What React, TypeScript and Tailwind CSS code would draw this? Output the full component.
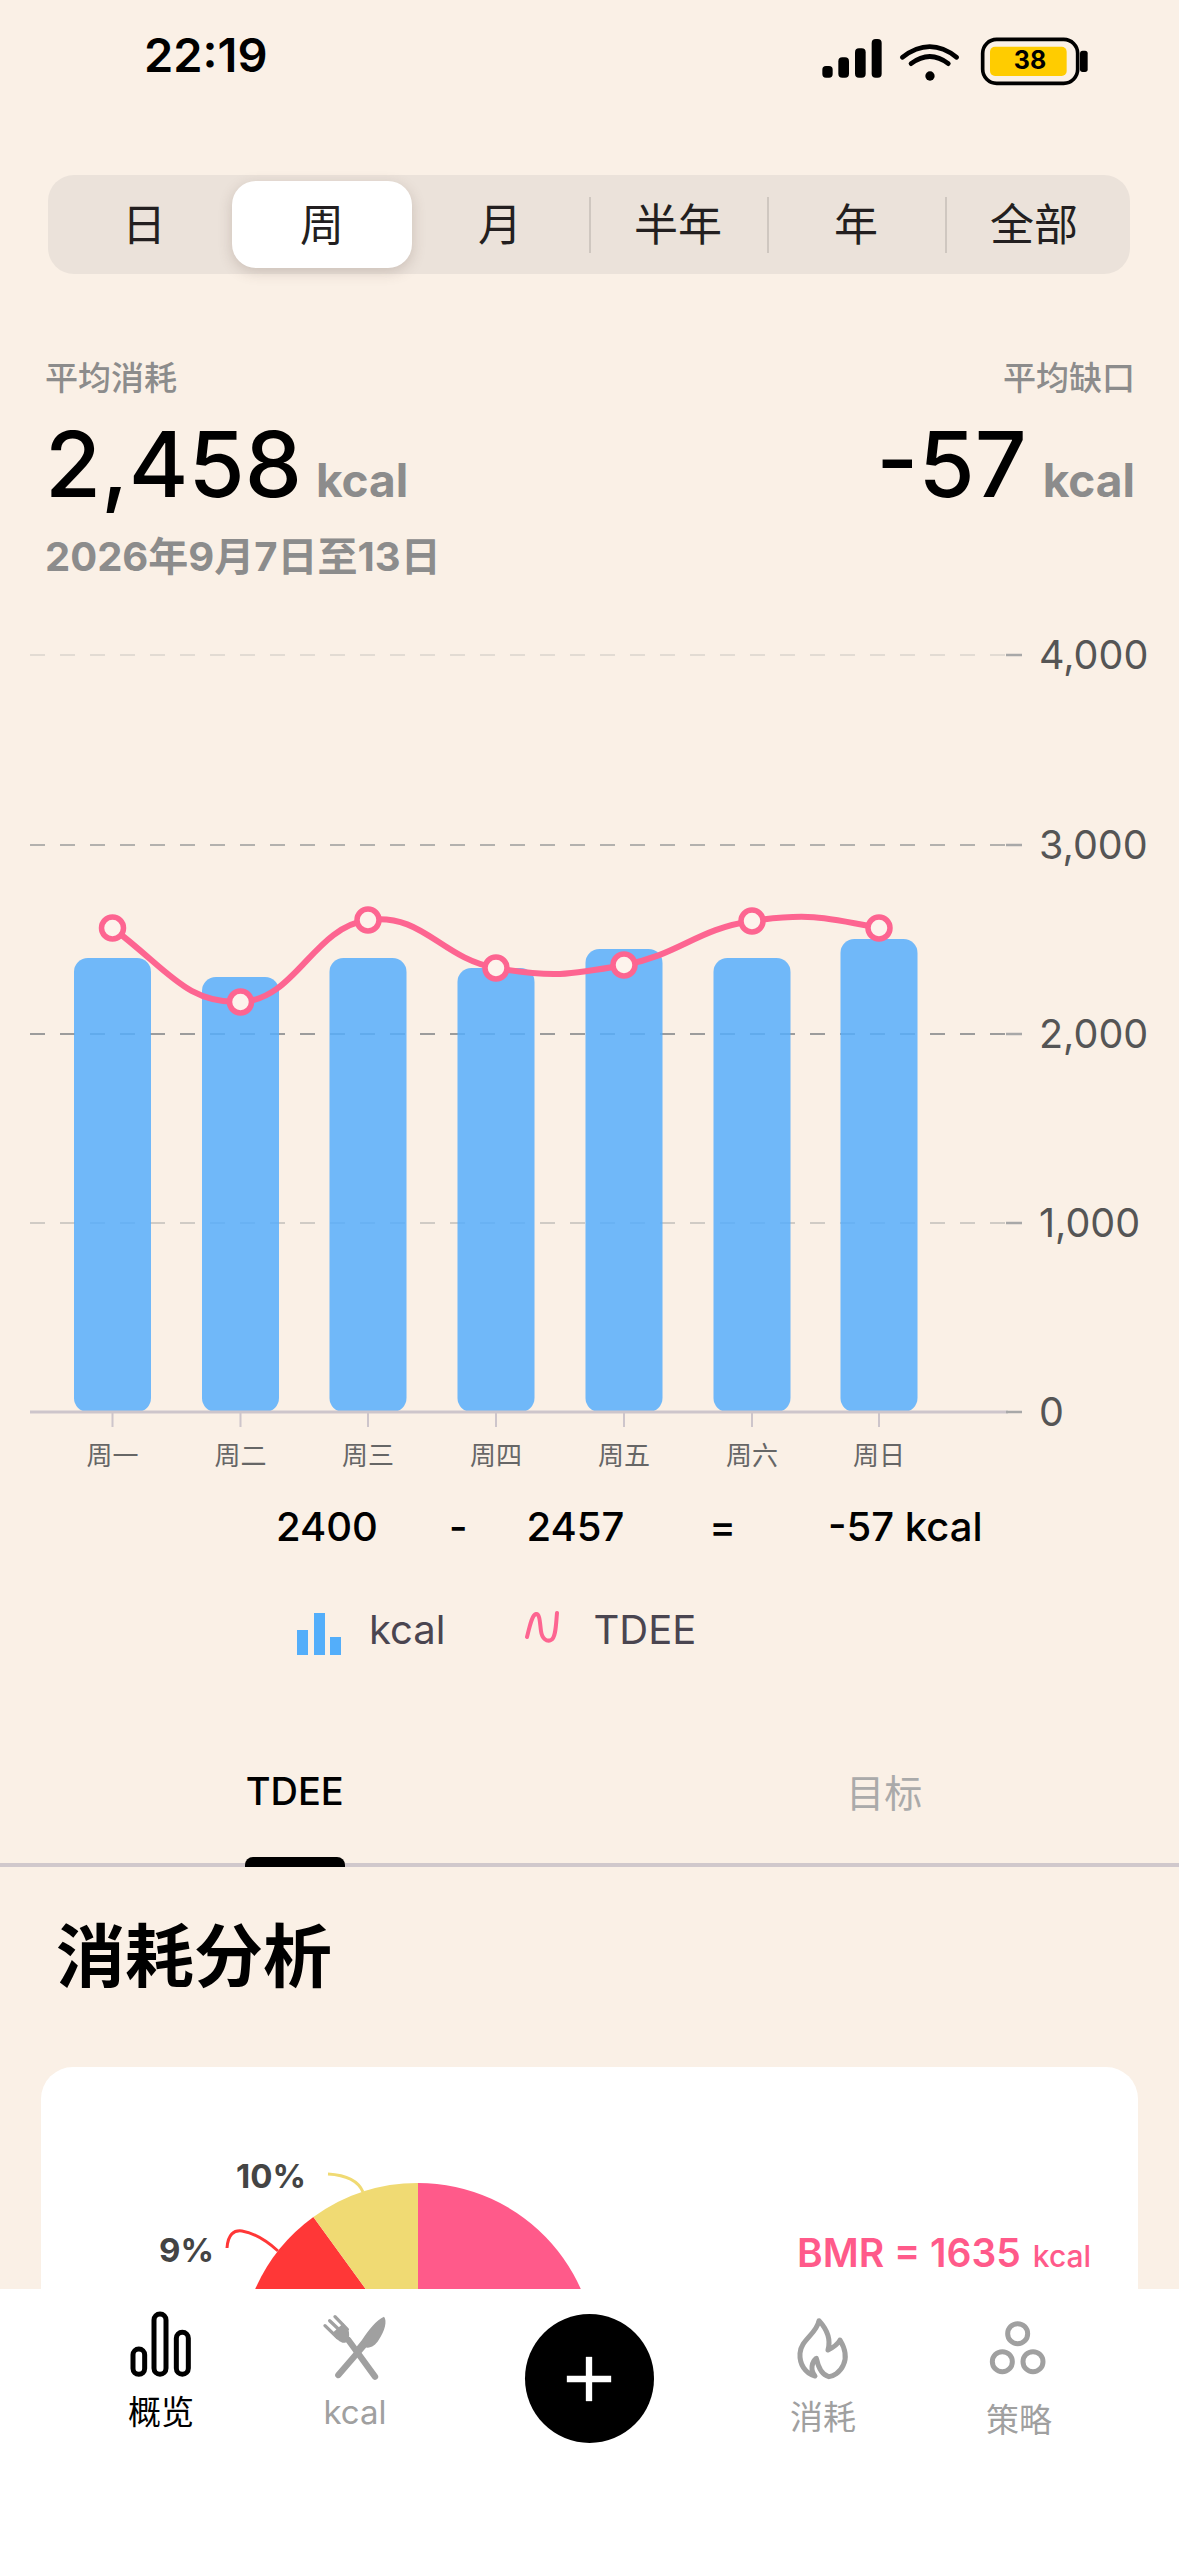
import { Plus } from "lucide-react";

const RANGES = ["日", "周", "月", "半年", "年", "全部"];
const GRID = [
  { y: 655, w: 1, o: 0.5, label: "4,000" },
  { y: 845, w: 1.5, o: 1, label: "3,000" },
  { y: 1034, w: 2, o: 1, label: "2,000" },
  { y: 1223, w: 1.2, o: 0.9, label: "1,000" },
];
const DAYS = [
  { x: 112.5, top: 958, tdee: 928, label: "周一" },
  { x: 240.5, top: 977, tdee: 1002, label: "周二" },
  { x: 368, top: 958, tdee: 920, label: "周三" },
  { x: 496, top: 968, tdee: 968, label: "周四" },
  { x: 624, top: 949, tdee: 965, label: "周五" },
  { x: 752, top: 958, tdee: 921, label: "周六" },
  { x: 879, top: 939, tdee: 928, label: "周日" },
];
const BASE = 1412;

// smooth line through the daily TDEE points
function tdeePath() {
  const slope = (i: number) => {
    if (i === 0) return 0.75;
    if (i === DAYS.length - 1) return 0.2;
    return (DAYS[i + 1].tdee - DAYS[i - 1].tdee) / (DAYS[i + 1].x - DAYS[i - 1].x);
  };
  let d = `M${DAYS[0].x} ${DAYS[0].tdee}`;
  for (let i = 0; i < DAYS.length - 1; i++) {
    const a = DAYS[i];
    const b = DAYS[i + 1];
    const h = 55;
    d += ` C${a.x + h} ${a.tdee + slope(i) * h} ${b.x - h} ${b.tdee - slope(i + 1) * h} ${b.x} ${b.tdee}`;
  }
  return d;
}

function StatusIcons() {
  return (
    <svg viewBox="0 0 1020 240" className="mt-[20px] mr-[59px] h-[80px] w-[340px]">
      <rect x="127" y="138" width="31" height="35" rx="11" />
      <rect x="175" y="112" width="32" height="61" rx="12" />
      <rect x="225" y="85" width="32" height="88" rx="12" />
      <rect x="275" y="57" width="30" height="116" rx="12" />
      <path d="M367 112 Q450 48 530 112" fill="none" stroke="#000" strokeWidth="14" strokeLinecap="round" />
      <path d="M393 131 Q450 88 505 131" fill="none" stroke="#000" strokeWidth="14" strokeLinecap="round" />
      <circle cx="450" cy="168" r="14" />
      <rect x="608" y="58" width="285" height="132" rx="42" fill="none" stroke="#000" strokeWidth="11" />
      <rect x="630" y="80" width="230" height="88" rx="15" fill="#ffcc00" />
      <rect x="900" y="92" width="23" height="64" rx="8" />
      <text x="750" y="146" textAnchor="middle" fontSize="75" fontWeight="700">
        38
      </text>
    </svg>
  );
}

function Chart() {
  return (
    <svg viewBox="0 610 1179 870" className="mt-[31px] block h-[870px] w-[1179px]">
      {GRID.map((g) => (
        <g key={g.y}>
          <line x1="30" x2="1006" y1={g.y} y2={g.y} stroke="#9c9c9c" strokeWidth={g.w} strokeOpacity={g.o} strokeDasharray="15 15" />
          <line x1="1006" x2="1022" y1={g.y} y2={g.y} stroke="#a8a8a8" strokeWidth="2.5" />
          <text x="1039" y={g.y + 14} fontSize="39.5" fill="#555555">
            {g.label}
          </text>
        </g>
      ))}
      {DAYS.map((d) => (
        <rect key={d.x} x={d.x - 38.5} y={d.top} width="77" height={BASE - d.top} rx="14" fill="#57aefb" fillOpacity="0.85" />
      ))}
      <line x1="30" x2="1008" y1={BASE} y2={BASE} stroke="#cdc5cb" strokeWidth="3" />
      <line x1="1006" x2="1022" y1={BASE} y2={BASE} stroke="#a8a8a8" strokeWidth="2.5" />
      <text x="1039" y={BASE + 14} fontSize="39.5" fill="#555555">
        0
      </text>
      {DAYS.map((d) => (
        <g key={d.label}>
          <line x1={d.x} x2={d.x} y1={BASE} y2="1427" stroke="#cdc5cb" strokeWidth="2" />
          <text x={d.x} y="1465" textAnchor="middle" fontSize="26" fill="#666666">
            {d.label}
          </text>
        </g>
      ))}
      <path d={tdeePath()} fill="none" stroke="#fd6591" strokeWidth="6" />
      {DAYS.map((d) => (
        <circle key={d.x} cx={d.x} cy={d.tdee} r="11" fill="#fdf3ec" stroke="#fd6591" strokeWidth="5.5" />
      ))}
    </svg>
  );
}

function sector(from: number, to: number) {
  const cx = 418;
  const cy = 2361;
  const r = 178;
  const pt = (a: number) => {
    const rad = (a * Math.PI) / 180;
    return `${cx + r * Math.sin(rad)} ${cy - r * Math.cos(rad)}`;
  };
  return `M${cx} ${cy} L${pt(from)} A${r} ${r} 0 ${to - from > 180 ? 1 : 0} 1 ${pt(to)} Z`;
}

function Pie() {
  return (
    <svg viewBox="41 2067 700 400" className="h-[400px] w-[700px] shrink-0">
      <path d={sector(0, 292)} fill="#ff5a8a" />
      <path d={sector(-68.4, -36)} fill="#ff3737" />
      <path d={sector(-36, 0)} fill="#f0da73" />
      <path d="M328 2174 C345 2175 358 2180 363 2192" fill="none" stroke="#f0da73" strokeWidth="3" />
      <path d="M227 2248 C228 2234 234 2230 242 2231 C254 2233 268 2242 278 2251" fill="none" stroke="#ff3737" strokeWidth="3" />
      <text x="236" y="2188" fontSize="33" fontWeight="700" fill="#444444">
        10%
      </text>
      <text x="159" y="2262" fontSize="33" fontWeight="700" fill="#444444">
        9%
      </text>
    </svg>
  );
}

function OverviewIcon() {
  return (
    <svg viewBox="33 60 300 225" className="h-[75px] w-[100px]" fill="none" stroke="#000" strokeWidth="15">
      <rect x="99" y="177" width="35" height="76" rx="17.5" />
      <rect x="162" y="72" width="36" height="181" rx="18" />
      <rect x="229" y="127" width="36" height="126" rx="18" />
    </svg>
  );
}

function FoodIcon() {
  return (
    <svg viewBox="615 60 300 225" className="h-[75px] w-[100px]" fill="#a0a0a0">
      <path d="M852 80 C862 92 855 122 836 150 C826 166 812 176 795 172 L772 196 L760 182 L786 150 C806 118 830 90 852 80Z" />
      <path d="M790 168 L715 255" stroke="#a0a0a0" strokeWidth="19" strokeLinecap="round" />
      <path d="M745 150 L825 260" stroke="#a0a0a0" strokeWidth="19" strokeLinecap="round" />
      <path d="M675 107 L712 143 M689 92 L727 128 M705 80 L742 118" stroke="#a0a0a0" strokeWidth="10" strokeLinecap="round" />
      <path d="M698 128 L730 100 L746 122 C750 140 745 155 735 158 C722 160 708 148 698 128Z" />
    </svg>
  );
}

function FlameIcon() {
  return (
    <svg viewBox="39 60 300 225" className="h-[75px] w-[100px]" fill="none" stroke="#a0a0a0" strokeWidth="15" strokeLinejoin="round">
      <path d="M177 92 C198 115 214 145 204 180 C220 172 234 162 240 150 C255 175 262 200 250 225 C240 248 218 260 206 260 C190 256 176 238 169 205 C155 216 150 240 165 258 C135 250 118 222 120 190 C122 150 170 132 177 92Z" />
    </svg>
  );
}

function StrategyIcon() {
  return (
    <svg viewBox="627 60 300 225" className="h-[75px] w-[100px]" fill="none" stroke="#a0a0a0" strokeWidth="15">
      <circle cx="773" cy="131" r="30" />
      <circle cx="727" cy="215" r="30" />
      <circle cx="819" cy="215" r="30" />
    </svg>
  );
}

function TabBar() {
  return (
    <div className="flex h-[267px] shrink-0 bg-white pt-[21px] pl-[64px] text-[33px] leading-[40px] text-[#a0a0a0]">
      <div className="flex w-[194px] flex-col items-center">
        <OverviewIcon />
        <span className="mt-[7px] text-black">概览</span>
      </div>
      <div className="flex w-[194px] flex-col items-center">
        <FoodIcon />
        <span className="mt-[7px]">kcal</span>
      </div>
      <div className="flex w-[274px] flex-col items-center">
        <button className="mt-[4px] flex h-[129px] w-[129px] items-center justify-center rounded-full bg-black text-white">
          <Plus size={76} strokeWidth={2} strokeLinecap="butt" />
        </button>
      </div>
      <div className="flex w-[194px] flex-col items-center">
        <FlameIcon />
        <span className="mt-[12px]">消耗</span>
      </div>
      <div className="flex w-[198px] flex-col items-center">
        <StrategyIcon />
        <span className="mt-[15px]">策略</span>
      </div>
    </div>
  );
}

export default function App() {
  return (
    <div className="flex h-[2556px] w-[1179px] flex-col overflow-hidden bg-[#faf0e6] font-['Inter','Noto_Sans_CJK_SC',sans-serif]">
      <div className="min-h-0 flex-1 overflow-hidden">
        <header className="flex h-[175px] items-start justify-between">
          <span className="mt-[32px] ml-[144px] text-[47px] leading-[46px] font-semibold text-black">22:19</span>
          <StatusIcons />
        </header>

        <div className="ml-[48px] grid h-[99px] w-[1082px] grid-cols-6 rounded-[26px] bg-[#ebe2da] px-[7px] py-[6px]">
          {RANGES.map((r, i) => (
            <div
              key={r}
              className={
                i === 1
                  ? "relative -mx-px flex items-center justify-center rounded-[24px] bg-white text-[44px] text-[#231f20] shadow-[0_4px_14px_rgba(90,70,60,0.22)]"
                  : "relative flex items-center justify-center text-[44px] text-[#231f20]"
              }
            >
              {r}
              {i > 2 && <span className="absolute top-[16px] left-0 h-[56px] w-[2px] bg-[#cfc7c0]" />}
            </div>
          ))}
        </div>

        <section className="mx-[45px] mt-[84px] flex items-start justify-between">
          <div>
            <div className="text-[33px] leading-[40px] font-medium text-[#8c8c8c]">平均消耗</div>
            <div className="mt-[16px] flex items-baseline gap-[14px] text-[91px] leading-[100px] font-medium text-black">
              2,458
              <span className="text-[46px] font-bold text-[#8c8c8c]">kcal</span>
            </div>
            <div className="mt-[5px] text-[40px] leading-[44px] font-bold text-[#8c8c8c]">2026年9月7日至13日</div>
          </div>
          <div className="-mr-[1px] text-right">
            <div className="text-[33px] leading-[40px] font-medium text-[#8c8c8c]">平均缺口</div>
            <div className="mt-[16px] flex items-baseline justify-end gap-[16px] text-[91px] leading-[100px] font-medium text-black">
              -57
              <span className="text-[46px] font-bold text-[#8c8c8c]">kcal</span>
            </div>
          </div>
        </section>

        <Chart />

        <div className="relative mt-[23px] flex h-[48px] text-[40px] leading-[48px] font-medium text-black">
          <span className="ml-[276px]">2400</span>
          <span className="ml-[71px]">-</span>
          <span className="ml-[59px]">2457</span>
          <span className="ml-[85px]">=</span>
          <span className="ml-[92px]">-57 kcal</span>
        </div>

        <div className="mt-[49px] flex h-[60px] items-center pl-[297px] text-[40px] text-[#4a4550]">
          <svg viewBox="0 0 44 42" className="mb-[-7px] h-[42px] w-[44px]" fill="#53aefa">
            <rect x="0" y="17" width="11" height="25" />
            <rect x="17" y="0" width="11" height="42" />
            <rect x="33" y="24" width="11" height="18" />
          </svg>
          <span className="ml-[28px]">kcal</span>
          <svg viewBox="0 0 44 32" className="mb-[6px] ml-[80px] h-[32px] w-[44px]" fill="none" stroke="#fd6591" strokeWidth="4" strokeLinecap="round">
            <path d="M2 26 C5 14 7 4 11 3 C15 2 15 14 16 20 C17 28 22 31 26 29 C31 27 31 12 32 2" />
          </svg>
          <span className="ml-[24px]">TDEE</span>
        </div>

        <div className="grid h-[207px] grid-cols-2 border-b-4 border-[#d0c8cc] text-[38px] leading-[50px]">
          <div className="flex flex-col items-center pt-[106px] font-medium text-black">
            TDEE
            <span className="relative mt-[41px] h-[10px] w-[100px] rounded-t-[8px] bg-black" />
          </div>
          <div className="pt-[108px] text-center text-[38px] text-[#aaaaaa]">目标</div>
        </div>

        <h2 className="mt-[50px] ml-[56px] text-[69px] leading-[80px] font-bold text-black">消耗分析</h2>

        <div className="mt-[70px] ml-[41px] flex h-[400px] w-[1097px] rounded-[32px] bg-white">
          <Pie />
          <div className="mt-[161px] ml-[56px] flex items-baseline gap-[12px] text-[39px] leading-[50px] font-semibold whitespace-nowrap text-[#ff5a8a]">
            BMR = 1635
            <span className="text-[30px] font-medium">kcal</span>
          </div>
        </div>
      </div>
      <TabBar />
    </div>
  );
}
